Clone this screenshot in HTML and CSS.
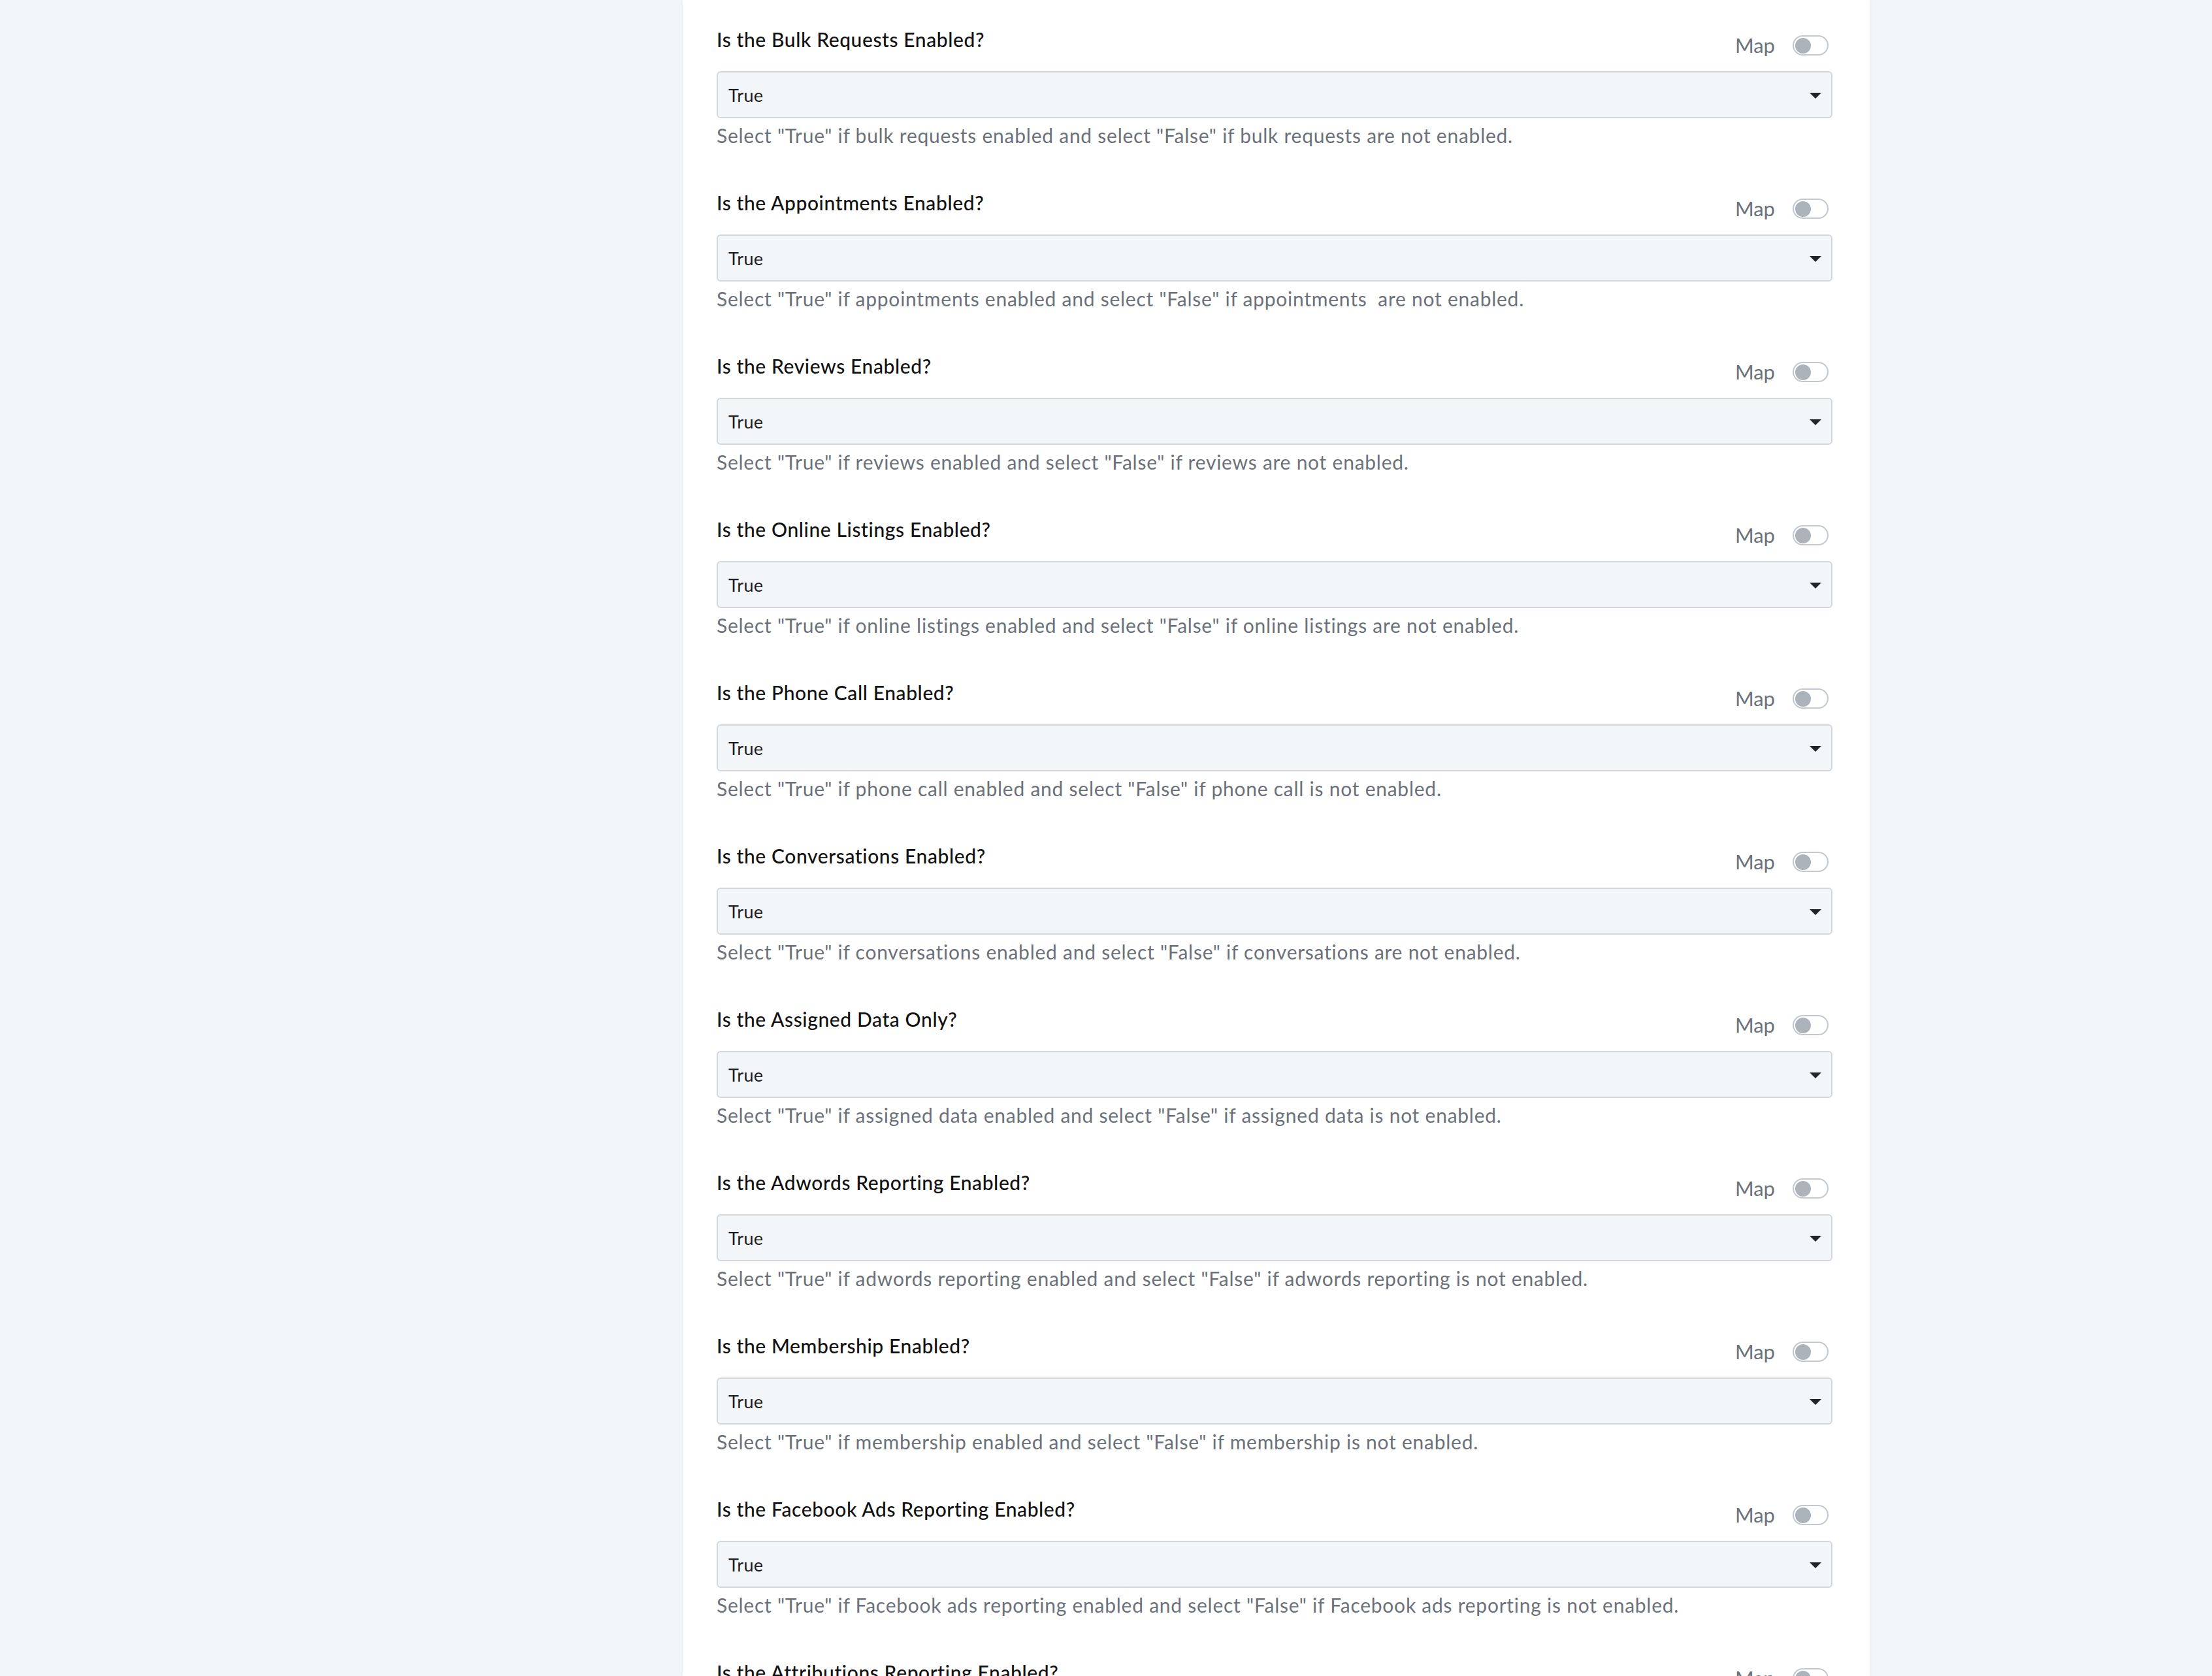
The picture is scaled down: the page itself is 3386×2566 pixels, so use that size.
FILE: index.html
```html
<!DOCTYPE html>
<html lang="en">
<head>
<meta charset="utf-8">
<title>Settings</title>
<link rel="stylesheet" href="styles.css">
</head>
<body>
<div class="page">
  <aside class="side"></aside>
  <main class="card">
    <div class="field">
      <div class="field-head">
        <label class="field-title">Is the Bulk Requests Enabled?</label>
        <div class="map"><span class="map-label">Map</span><span class="toggle"><span class="knob"></span></span></div>
      </div>
      <div class="select"><span class="select-value">True</span><span class="caret"></span></div>
      <p class="help">Select "True" if bulk requests enabled and select "False" if bulk requests are not enabled.</p>
    </div>
    <div class="field">
      <div class="field-head">
        <label class="field-title">Is the Appointments Enabled?</label>
        <div class="map"><span class="map-label">Map</span><span class="toggle"><span class="knob"></span></span></div>
      </div>
      <div class="select"><span class="select-value">True</span><span class="caret"></span></div>
      <p class="help">Select "True" if appointments enabled and select "False" if appointments&nbsp; are not enabled.</p>
    </div>
    <div class="field">
      <div class="field-head">
        <label class="field-title">Is the Reviews Enabled?</label>
        <div class="map"><span class="map-label">Map</span><span class="toggle"><span class="knob"></span></span></div>
      </div>
      <div class="select"><span class="select-value">True</span><span class="caret"></span></div>
      <p class="help">Select "True" if reviews enabled and select "False" if reviews are not enabled.</p>
    </div>
    <div class="field">
      <div class="field-head">
        <label class="field-title">Is the Online Listings Enabled?</label>
        <div class="map"><span class="map-label">Map</span><span class="toggle"><span class="knob"></span></span></div>
      </div>
      <div class="select"><span class="select-value">True</span><span class="caret"></span></div>
      <p class="help">Select "True" if online listings enabled and select "False" if online listings are not enabled.</p>
    </div>
    <div class="field">
      <div class="field-head">
        <label class="field-title">Is the Phone Call Enabled?</label>
        <div class="map"><span class="map-label">Map</span><span class="toggle"><span class="knob"></span></span></div>
      </div>
      <div class="select"><span class="select-value">True</span><span class="caret"></span></div>
      <p class="help">Select "True" if phone call enabled and select "False" if phone call is not enabled.</p>
    </div>
    <div class="field">
      <div class="field-head">
        <label class="field-title">Is the Conversations Enabled?</label>
        <div class="map"><span class="map-label">Map</span><span class="toggle"><span class="knob"></span></span></div>
      </div>
      <div class="select"><span class="select-value">True</span><span class="caret"></span></div>
      <p class="help">Select "True" if conversations enabled and select "False" if conversations are not enabled.</p>
    </div>
    <div class="field">
      <div class="field-head">
        <label class="field-title">Is the Assigned Data Only?</label>
        <div class="map"><span class="map-label">Map</span><span class="toggle"><span class="knob"></span></span></div>
      </div>
      <div class="select"><span class="select-value">True</span><span class="caret"></span></div>
      <p class="help">Select "True" if assigned data enabled and select "False" if assigned data is not enabled.</p>
    </div>
    <div class="field">
      <div class="field-head">
        <label class="field-title">Is the Adwords Reporting Enabled?</label>
        <div class="map"><span class="map-label">Map</span><span class="toggle"><span class="knob"></span></span></div>
      </div>
      <div class="select"><span class="select-value">True</span><span class="caret"></span></div>
      <p class="help">Select "True" if adwords reporting enabled and select "False" if adwords reporting is not enabled.</p>
    </div>
    <div class="field">
      <div class="field-head">
        <label class="field-title">Is the Membership Enabled?</label>
        <div class="map"><span class="map-label">Map</span><span class="toggle"><span class="knob"></span></span></div>
      </div>
      <div class="select"><span class="select-value">True</span><span class="caret"></span></div>
      <p class="help">Select "True" if membership enabled and select "False" if membership is not enabled.</p>
    </div>
    <div class="field">
      <div class="field-head">
        <label class="field-title">Is the Facebook Ads Reporting Enabled?</label>
        <div class="map"><span class="map-label">Map</span><span class="toggle"><span class="knob"></span></span></div>
      </div>
      <div class="select"><span class="select-value">True</span><span class="caret"></span></div>
      <p class="help">Select "True" if Facebook ads reporting enabled and select "False" if Facebook ads reporting is not enabled.</p>
    </div>
    <div class="field">
      <div class="field-head">
        <label class="field-title">Is the Attributions Reporting Enabled?</label>
        <div class="map"><span class="map-label">Map</span><span class="toggle"><span class="knob"></span></span></div>
      </div>
      <div class="select"><span class="select-value">True</span><span class="caret"></span></div>
      <p class="help">Select "True" if attributions reporting enabled and select "False" if attributions reporting is not enabled.</p>
    </div>
  </main>
</div>
</body>
</html>
```

FILE: styles.css
```css
html, body {
  margin: 0;
  padding: 0;
  height: 2566px;
  overflow: hidden;
  background: #f3f6f9;
  font-family: "Lato", "Noto Sans", sans-serif;
}

.page {
  display: grid;
  grid-template-columns: 1045px 1817px;
  height: 2566px;
}

.card {
  background: #ffffff;
  box-shadow: 0 0 7px rgba(40, 60, 90, 0.08);
  padding: 0 57px 0 52px;
  overflow: hidden;
}

.field {
  padding-bottom: 23px;
}

.field-head {
  display: flex;
  justify-content: space-between;
  align-items: flex-start;
  height: 109px;
  padding-right: 6px;
}

.field-title {
  margin-top: 40px;
  font-size: 30px;
  line-height: 40px;
  font-weight: 500;
  letter-spacing: 0.6px;
  color: #111111;
}

.map {
  margin-top: 54px;
  display: flex;
  align-items: center;
  gap: 27px;
}

.map-label {
  font-size: 31px;
  line-height: 31px;
  color: #6b717a;
}

.toggle {
  box-sizing: border-box;
  width: 55px;
  height: 31px;
  border: 2px solid #c3c8cf;
  border-radius: 16px;
  background: #fff;
  display: flex;
  align-items: center;
  padding-left: 2px;
}

.knob {
  width: 24px;
  height: 24px;
  border-radius: 50%;
  background: #adb3bb;
}

.select {
  box-sizing: border-box;
  height: 72px;
  border: 2px solid #d3d7dc;
  border-radius: 6px;
  background: #f3f6f9;
  display: flex;
  align-items: center;
  justify-content: space-between;
  padding: 0 15px 0 16px;
}

.select-value {
  font-size: 27px;
  letter-spacing: 0.3px;
  color: #1d1d1f;
}

.caret {
  width: 0;
  height: 0;
  border-left: 9px solid transparent;
  border-right: 9px solid transparent;
  border-top: 9px solid #222428;
  margin-top: 2px;
}

.help {
  margin: 6px 0 0;
  font-size: 30px;
  line-height: 40px;
  letter-spacing: 0.75px;
  color: #6b717a;
}
```
